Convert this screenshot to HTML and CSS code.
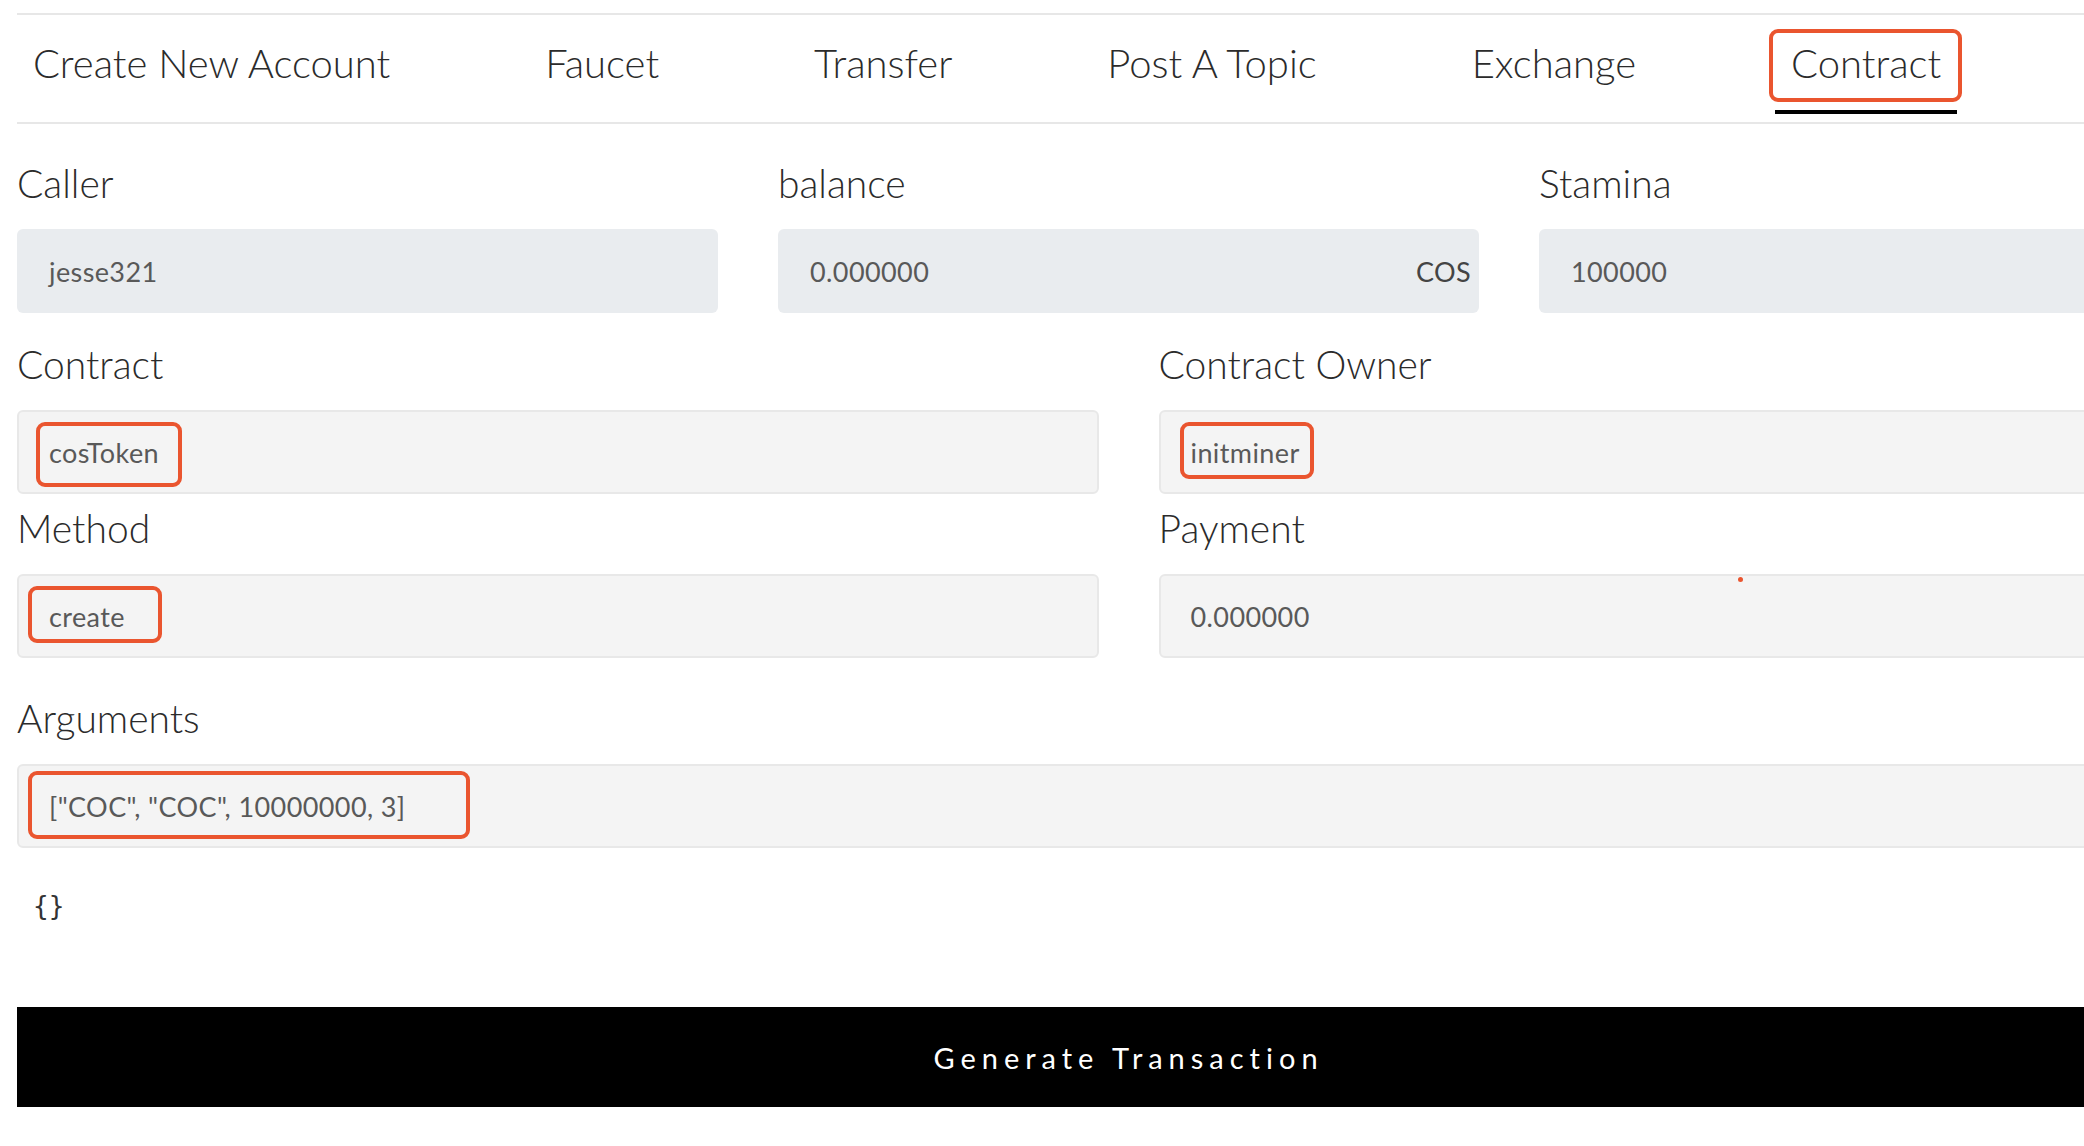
FILE: index.html
```html
<!DOCTYPE html>
<html lang="en">
<head>
<meta charset="utf-8">
<title>Contract</title>
<link rel="stylesheet" href="styles.css">
</head>
<body>
<div class="page">
  <nav class="nav">
    <div class="tab">Create New Account</div>
    <div class="tab">Faucet</div>
    <div class="tab">Transfer</div>
    <div class="tab">Post A Topic</div>
    <div class="tab">Exchange</div>
    <div class="tab tab-active">Contract<span class="mark mark-tab"></span></div>
  </nav>

  <div class="row row-3">
    <div class="group">
      <div class="label">Caller</div>
      <div class="field field-muted">jesse321</div>
    </div>
    <div class="group">
      <div class="label">balance</div>
      <div class="field field-muted field-split"><span>0.000000</span><span class="suffix">COS</span></div>
    </div>
    <div class="group">
      <div class="label">Stamina</div>
      <div class="field field-muted">100000</div>
    </div>
  </div>

  <div class="row row-2 row-contract">
    <div class="group">
      <div class="label">Contract</div>
      <div class="field field-light">cosToken<span class="mark mark-contract"></span></div>
    </div>
    <div class="group">
      <div class="label">Contract Owner</div>
      <div class="field field-light">initminer<span class="mark mark-owner"></span></div>
    </div>
  </div>

  <div class="row row-2 row-method">
    <div class="group">
      <div class="label">Method</div>
      <div class="field field-light">create<span class="mark mark-method"></span></div>
    </div>
    <div class="group">
      <div class="label">Payment</div>
      <div class="field field-light">0.000000<span class="dot"></span></div>
    </div>
  </div>

  <div class="row row-args">
    <div class="group">
      <div class="label">Arguments</div>
      <div class="field field-light">["COC", "COC", 10000000, 3]<span class="mark mark-args"></span></div>
    </div>
  </div>

  <pre class="result">{}</pre>

  <button class="generate">Generate Transaction</button>
</div>
</body>
</html>
```

FILE: styles.css
```css
html, body {
  margin: 0;
  padding: 0;
  background: #ffffff;
  overflow: hidden;
}

body {
  font-family: "Lato", "Noto Sans", sans-serif;
  color: #333333;
}

.page {
  width: 2223px;
  padding-left: 17px;
}

.nav {
  margin-top: 13px;
  border-top: 2px solid #e7e7e7;
  border-bottom: 2px solid #e7e7e7;
  height: 107px;
  display: flex;
  gap: 123px;
}

.tab {
  position: relative;
  padding: 24px 16px 0;
  font-size: 40px;
  font-weight: 300;
  line-height: 48px;
  color: #2b2b2b;
  white-space: nowrap;
}

.tab-active::after {
  content: "";
  position: absolute;
  left: 0;
  right: 0;
  top: 95px;
  height: 4px;
  background: #000000;
}

.mark {
  position: absolute;
  border: 4px solid #ea552f;
  border-radius: 9px;
  box-sizing: border-box;
  pointer-events: none;
}

.mark-tab {
  left: -6px;
  top: 14px;
  width: 193px;
  height: 73px;
}

.row {
  display: grid;
  column-gap: 60px;
}

.row-3 {
  grid-template-columns: repeat(3, 1fr);
  margin-top: 37px;
}

.row-2 {
  grid-template-columns: repeat(2, 1fr);
}

.row-contract {
  margin-top: 29px;
}

.row-method {
  margin-top: 12px;
}

.row-args {
  grid-template-columns: 1fr;
  margin-top: 38px;
}

.label {
  font-size: 39px;
  font-weight: 300;
  line-height: 44px;
  color: #2b2b2b;
  margin-bottom: 24px;
}

.field {
  position: relative;
  box-sizing: border-box;
  height: 84px;
  padding-left: 32px;
  padding-right: 8px;
  display: flex;
  align-items: center;
  font-size: 27px;
  letter-spacing: 0.4px;
  color: #595959;
  border-radius: 6px;
}

.field-muted {
  background: #e9ecef;
}

.field-light {
  background: #f4f4f4;
  border: 2px solid #e8e8e8;
  padding-left: 30px;
}

.field-split {
  justify-content: space-between;
}

.suffix {
  color: #444444;
}

.mark-contract {
  left: 17px;
  top: 10px;
  width: 146px;
  height: 65px;
}

.mark-owner {
  left: 19px;
  top: 10px;
  width: 134px;
  height: 57px;
}

.mark-method {
  left: 9px;
  top: 10px;
  width: 134px;
  height: 57px;
}

.mark-args {
  left: 9px;
  top: 5px;
  width: 442px;
  height: 68px;
}

.dot {
  position: absolute;
  left: 577px;
  top: 1px;
  width: 5px;
  height: 5px;
  border-radius: 50%;
  background: #ea552f;
}

.result {
  margin: 43px 0 0 16px;
  font-family: "DejaVu Sans Mono", monospace;
  font-size: 26px;
  line-height: 30px;
  color: #333333;
}

.generate {
  display: block;
  width: 100%;
  height: 100px;
  margin-top: 86px;
  border: 0;
  background: #000000;
  color: #ffffff;
  font-family: "Lato", "Noto Sans", sans-serif;
  font-size: 29px;
  letter-spacing: 6px;
  cursor: pointer;
}
```
